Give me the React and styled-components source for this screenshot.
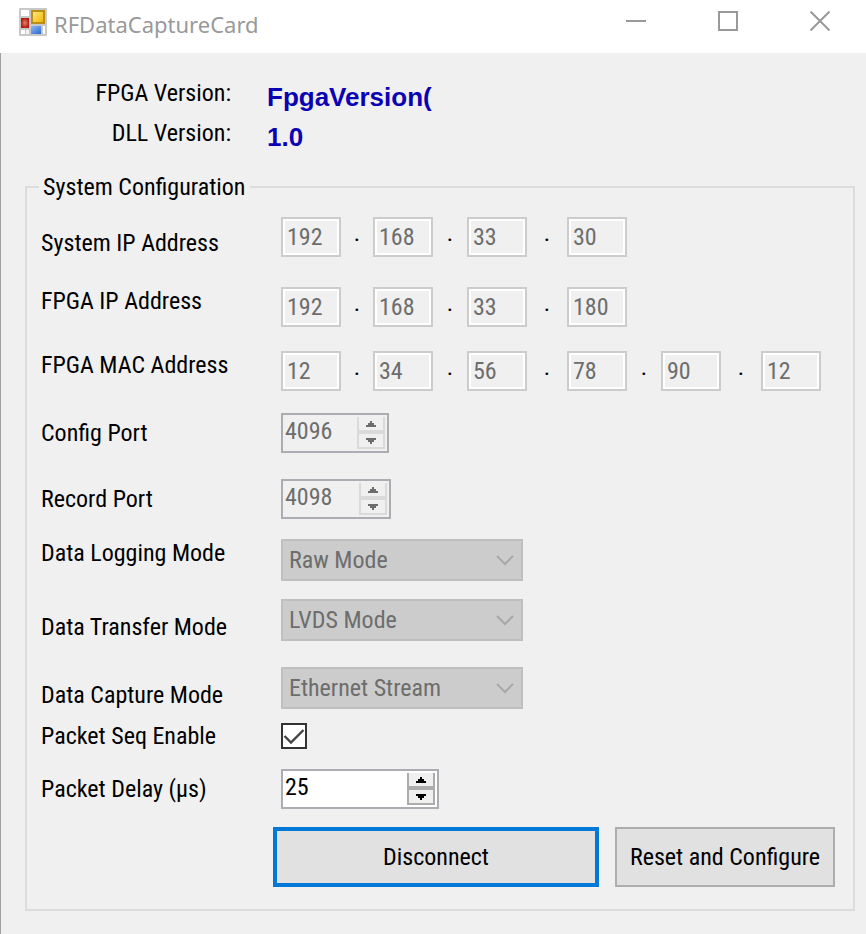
import React, { useState } from "react";
import styled, { createGlobalStyle } from "styled-components";

const ADDRESSES = [
  {
    id: "system-ip",
    label: "System IP Address",
    octets: ["192", "168", "33", "30"],
    space: 0,
    align: "end",
  },
  {
    id: "fpga-ip",
    label: "FPGA IP Address",
    octets: ["192", "168", "33", "180"],
    space: 30,
    align: "start",
  },
  {
    id: "fpga-mac",
    label: "FPGA MAC Address",
    octets: ["12", "34", "56", "78", "90", "12"],
    space: 24,
    align: "start",
  },
];

const MODES = [
  {
    id: "logging",
    label: "Data Logging Mode",
    options: ["Raw Mode", "Multi Mode"],
    space: 20,
    align: "start",
  },
  {
    id: "transfer",
    label: "Data Transfer Mode",
    options: ["LVDS Mode", "DMM Mode"],
    space: 18,
    align: "end",
  },
  {
    id: "capture",
    label: "Data Capture Mode",
    options: ["Ethernet Stream", "SD Card"],
    space: 26,
    align: "end",
  },
];

const AppIcon = () => (
  <svg width="28" height="28" viewBox="0 0 28 28" aria-hidden="true">
    <defs>
      <linearGradient id="gold" x1="0" y1="0" x2="1" y2="1">
        <stop offset="0" stopColor="#ffe680" />
        <stop offset="1" stopColor="#f2b705" />
      </linearGradient>
      <linearGradient id="blue" x1="0" y1="0" x2="1" y2="1">
        <stop offset="0" stopColor="#8db8f5" />
        <stop offset="1" stopColor="#2e66cf" />
      </linearGradient>
      <radialGradient id="red">
        <stop offset="0" stopColor="#e88070" />
        <stop offset="1" stopColor="#b51a10" />
      </radialGradient>
    </defs>
    <rect width="28" height="28" rx="1" fill="#c8c8c8" />
    <rect x="2" y="2" width="8" height="6" fill="#fff" />
    <rect x="2" y="10" width="8" height="10" fill="url(#red)" />
    <rect x="12" y="2" width="14" height="14" fill="#b98f14" />
    <rect x="14" y="4" width="10" height="10" fill="url(#gold)" />
    <rect x="2" y="22" width="4" height="4" fill="#fff" />
    <rect x="7" y="22" width="3" height="4" fill="#f4f4f4" />
    <rect x="12" y="18" width="10" height="8" fill="url(#blue)" />
    <rect x="24" y="18" width="2" height="8" fill="#fff" />
  </svg>
);

const AddressRow = ({ id, label, octets, space, align }) => (
  <Row $space={space} $align={align}>
    <Label htmlFor={`${id}-0`}>{label}</Label>
    <Octets>
      {octets.map((octet, i) => (
        <React.Fragment key={i}>
          {i > 0 && <Dot>.</Dot>}
          <Octet
            id={`${id}-${i}`}
            aria-label={`${label} ${i + 1}`}
            defaultValue={octet}
            disabled
          />
        </React.Fragment>
      ))}
    </Octets>
  </Row>
);

const NumberBox = ({ id, label, value, onChange, width, disabled }) => (
  <Spinner $width={width} $disabled={disabled}>
    <SpinnerInput
      id={id}
      type="number"
      value={value}
      disabled={disabled}
      onChange={(e) => onChange(Number(e.target.value))}
    />
    <SpinnerButtons $disabled={disabled}>
      <SpinnerButton
        aria-label={`Increase ${label}`}
        disabled={disabled}
        onClick={() => onChange(value + 1)}
      >
        <svg width="10" height="6" viewBox="0 0 10 6">
          <path d="M4 0h2v2h2v2h2v2H0V4h2V2h2z" fill="currentColor" />
        </svg>
      </SpinnerButton>
      <SpinnerButton
        aria-label={`Decrease ${label}`}
        disabled={disabled}
        onClick={() => onChange(value - 1)}
      >
        <svg width="10" height="6" viewBox="0 0 10 6">
          <path d="M0 0h10v2H8v2H6v2H4V4H2V2H0z" fill="currentColor" />
        </svg>
      </SpinnerButton>
    </SpinnerButtons>
  </Spinner>
);

const ModeRow = ({ id, label, options, space, align }) => (
  <Row $space={space} $align={align}>
    <Label htmlFor={id}>{label}</Label>
    <SelectBox>
      <Select id={id} disabled>
        {options.map((option) => (
          <option key={option}>{option}</option>
        ))}
      </Select>
      <Chevron width="18" height="12" viewBox="0 0 18 12">
        <path d="M1 2l8 8 8-8" fill="none" stroke="#a8a8a8" strokeWidth="2" />
      </Chevron>
    </SelectBox>
  </Row>
);

const App = () => {
  const [configPort, setConfigPort] = useState(4096);
  const [recordPort, setRecordPort] = useState(4098);
  const [seqEnabled, setSeqEnabled] = useState(true);
  const [delay, setDelay] = useState(25);

  return (
    <>
      <GlobalStyle />
      <Window>
        <TitleBar>
          <AppIcon />
          <Title>RFDataCaptureCard</Title>
          <CaptionButton aria-label="Minimize">
            <svg width="20" height="20" viewBox="0 0 20 20">
              <path d="M0 10h20" stroke="#999" strokeWidth="2" />
            </svg>
          </CaptionButton>
          <CaptionButton aria-label="Maximize">
            <svg width="20" height="20" viewBox="0 0 20 20">
              <path
                d="M1 1h18v18H1z"
                fill="none"
                stroke="#999"
                strokeWidth="2"
              />
            </svg>
          </CaptionButton>
          <CaptionButton aria-label="Close">
            <svg width="20" height="20" viewBox="0 0 20 20">
              <path
                d="M0.5 0.5l19 19M19.5 0.5l-19 19"
                stroke="#999"
                strokeWidth="2"
              />
            </svg>
          </CaptionButton>
        </TitleBar>

        <Body>
          <Versions>
            <VersionName>FPGA Version:</VersionName>
            <VersionValue>FpgaVersion(</VersionValue>
            <VersionName>DLL Version:</VersionName>
            <VersionValue>1.0</VersionValue>
          </Versions>

          <Group>
            <Legend>System Configuration</Legend>

            {ADDRESSES.map((address) => (
              <AddressRow key={address.id} {...address} />
            ))}

            <Row $space={22}>
              <Label htmlFor="config-port">Config Port</Label>
              <NumberBox
                id="config-port"
                label="Config Port"
                value={configPort}
                onChange={setConfigPort}
                width={108}
                disabled
              />
            </Row>
            <Row $space={26}>
              <Label htmlFor="record-port">Record Port</Label>
              <NumberBox
                id="record-port"
                label="Record Port"
                value={recordPort}
                onChange={setRecordPort}
                width={110}
                disabled
              />
            </Row>

            {MODES.map((mode) => (
              <ModeRow key={mode.id} {...mode} />
            ))}

            <Row $space={13}>
              <Label htmlFor="seq-enable">Packet Seq Enable</Label>
              <CheckBox>
                <CheckInput
                  id="seq-enable"
                  type="checkbox"
                  checked={seqEnabled}
                  onChange={(e) => setSeqEnabled(e.target.checked)}
                />
                {seqEnabled && (
                  <CheckMark width="22" height="22" viewBox="0 0 22 22">
                    <path
                      d="M1.5 11l6.500 6.500L20.500 5"
                      fill="none"
                      stroke="#444"
                      strokeWidth="2.4"
                    />
                  </CheckMark>
                )}
              </CheckBox>
            </Row>
            <Row $space={19}>
              <Label htmlFor="packet-delay">Packet Delay (µs)</Label>
              <NumberBox
                id="packet-delay"
                label="Packet Delay"
                value={delay}
                onChange={setDelay}
                width={158}
              />
            </Row>

            <Actions>
              <PrimaryButton>Disconnect</PrimaryButton>
              <Button>Reset and Configure</Button>
            </Actions>
          </Group>
        </Body>
      </Window>
    </>
  );
};

const GlobalStyle = createGlobalStyle`
  * {
    box-sizing: border-box;
  }

  body {
    margin: 0;
    background: #f0f0f0;
  }

  body, button, input, select {
    font-family: "Roboto Condensed", "Liberation Sans", sans-serif;
    font-size: 24px;
    line-height: 28px;
    color: #000;
  }
`;

const Window = styled.main`
  display: flex;
  flex-direction: column;
  min-height: 100vh;
`;

const TitleBar = styled.header`
  display: flex;
  align-items: flex-start;
  height: 53px;
  padding-left: 19px;
  background: #fff;

  > svg {
    margin-top: 8px;
  }
`;

const Title = styled.h1`
  flex: 1;
  margin: 8px 0 0 7px;
  font-family: "Noto Sans", sans-serif;
  font-size: 22px;
  font-weight: 400;
  line-height: 32px;
  color: #999;
`;

const CaptionButton = styled.button`
  display: flex;
  align-items: center;
  justify-content: center;
  width: 92px;
  height: 42px;
  padding: 0;
  border: 0;
  background: none;
`;

const Body = styled.div`
  flex: 1;
  padding: 26px 11px 23px 24px;
  border-left: 1px solid #a0a0a0;
`;

const Versions = styled.dl`
  display: grid;
  grid-template-columns: 206px 1fr;
  grid-auto-rows: 40px;
  column-gap: 36px;
  margin: 0;
`;

const VersionName = styled.dt`
  text-align: right;
`;

const VersionValue = styled.dd`
  margin: 0;
  font-family: "Liberation Sans", sans-serif;
  font-size: 26px;
  font-weight: 700;
  line-height: 36px;
  color: #0a00b4;
`;

const Group = styled.fieldset`
  min-width: 0;
  margin: 14px 0 0;
  padding: 16px 18px 22px 14px;
  border: 2px solid #dcdcdc;
`;

const Legend = styled.legend`
  margin-left: -2px;
  padding: 0 5px 0 4px;
`;

const Row = styled.div`
  display: grid;
  grid-template-columns: 240px 1fr;
  align-items: ${(props) => props.$align || "center"};
  margin-top: ${(props) => props.$space}px;
`;

const Label = styled.label``;

const Octets = styled.div`
  display: grid;
  grid-template-columns: 60px 32px 60px 34px 60px 40px 60px 34px 60px 40px 60px;
`;

const Octet = styled.input`
  width: 100%;
  height: 40px;
  padding: 0 0 0 2px;
  border: 2px solid #ccc;
  outline: 2px solid #fff;
  outline-offset: -4px;
  background: #f0f0f0;
  color: #6d6d6d;
  text-indent: 2px;
`;

const Dot = styled.span`
  padding-top: 2px;
  text-align: center;
`;

const Spinner = styled.div`
  display: flex;
  width: ${(props) => props.$width}px;
  height: 40px;
  padding: 2px 2px 2px 0;
  border: 2px solid #abadb3;
  background: ${(props) => (props.$disabled ? "#f0f0f0" : "#fff")};
`;

const SpinnerInput = styled.input`
  flex: 1;
  min-width: 0;
  padding: 0 0 4px 2px;
  border: 0;
  outline: 0;
  background: none;
  appearance: textfield;

  &::-webkit-inner-spin-button {
    appearance: none;
  }

  &:disabled {
    color: #6d6d6d;
  }
`;

const SpinnerButtons = styled.div`
  display: grid;
  grid-template-rows: 1fr 1fr;
  gap: 4px;
  width: 28px;
  border: 2px solid;
  border-top: 0;
  border-color: ${(props) => (props.$disabled ? "#dadada" : "#acacac")};
  background: ${(props) => (props.$disabled ? "#dadada" : "#acacac")};
`;

const SpinnerButton = styled.button`
  display: flex;
  align-items: center;
  justify-content: center;
  min-height: 0;
  padding: 0;
  border: 0;
  background: #f0f0f0;
  color: #000;

  &:disabled {
    color: #6d6d6d;
  }
`;

const SelectBox = styled.div`
  display: grid;
  align-items: center;
  width: 242px;
`;

const Select = styled.select`
  grid-area: 1 / 1;
  height: 42px;
  padding: 0 36px 0 6px;
  border: 2px solid #bfbfbf;
  border-radius: 0;
  background: #ccc;
  appearance: none;

  &:disabled {
    color: #6d6d6d;
    opacity: 1;
  }
`;

const Chevron = styled.svg`
  grid-area: 1 / 1;
  justify-self: end;
  margin-right: 9px;
  pointer-events: none;
`;

const CheckBox = styled.span`
  display: grid;
  place-items: center;
  width: 26px;
  height: 26px;
`;

const CheckInput = styled.input`
  grid-area: 1 / 1;
  width: 26px;
  height: 26px;
  margin: 0;
  border: 2px solid #333;
  background: #fff;
  appearance: none;
`;

const CheckMark = styled.svg`
  grid-area: 1 / 1;
  pointer-events: none;
`;

const Actions = styled.div`
  display: flex;
  gap: 16px;
  margin: 18px 0 0 232px;
`;

const Button = styled.button`
  width: 220px;
  height: 60px;
  padding: 0;
  border: 2px solid #adadad;
  background: #e1e1e1;
  white-space: nowrap;
`;

const PrimaryButton = styled(Button)`
  flex: 1;
  border: 4px solid #0078d7;
`;

export default App;
